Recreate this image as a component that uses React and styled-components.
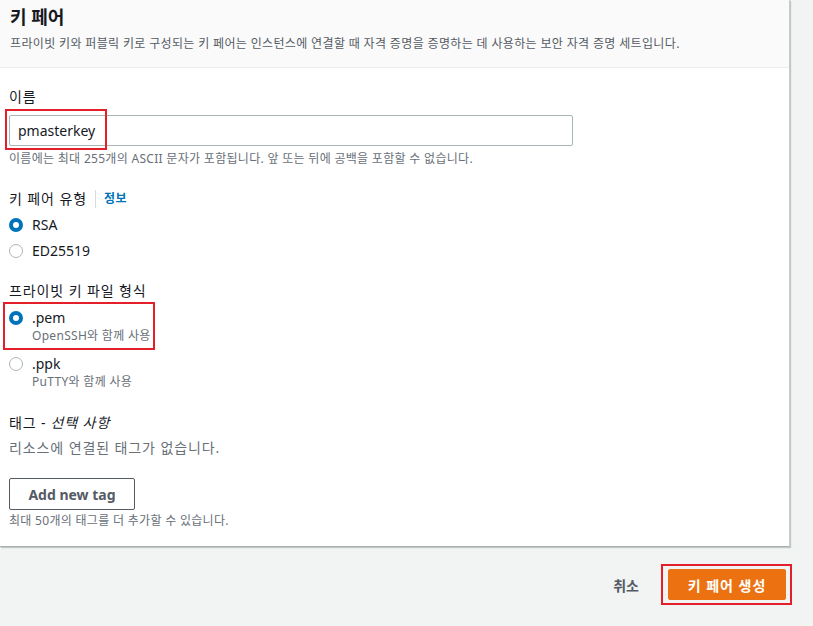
import React from 'react';
import styled, { createGlobalStyle } from 'styled-components';

const GlobalStyle = createGlobalStyle`
  html, body {
    margin: 0;
    padding: 0;
    background: #f2f3f3;
    font-family: "Noto Sans", "Noto Sans CJK KR", sans-serif;
    color: #16191f;
  }
`;

const Page = styled.div`
  width: 813px;
  height: 626px;
  overflow: hidden;
`;

const Card = styled.section`
  width: 789px;
  background: #ffffff;
  border-right: 1px solid #c6cccc;
  border-bottom: 1px solid #a9b0b0;
  box-shadow: 1px 1px 1px rgba(0, 28, 36, 0.2);
`;

const CardHeader = styled.header`
  background: #fafafa;
  border-bottom: 1px solid #eaeded;
  padding: 5px 10px 0;
  height: 62px;
`;

const Title = styled.h2`
  margin: 0;
  font-size: 18px;
  line-height: 24px;
  font-weight: 700;
`;

const Description = styled.p`
  margin: 7px 0 0;
  font-size: 12px;
  line-height: 16px;
  letter-spacing: 0.35px;
  color: #545b64;
`;

const CardBody = styled.div`
  padding: 19px 9px 17px;
  display: flex;
  flex-direction: column;
`;

const Field = styled.div`
  display: flex;
  flex-direction: column;
  margin-bottom: ${p => p.$gap || 20}px;
`;

const Label = styled.div`
  font-size: 14px;
  line-height: 20px;
  letter-spacing: 0.9px;
  margin-bottom: ${p => p.$gap || 8}px;
  display: flex;
  align-items: center;
`;

const Italic = styled.i`
  margin-left: 4px;
`;

const InfoLink = styled.span`
  color: #0073bb;
  font-size: 12px;
  font-weight: 700;
  letter-spacing: 0.5px;
  border-left: 1px solid #d5dbdb;
  margin-left: 8px;
  padding-left: 8px;
  line-height: 18px;
`;

const InputWrap = styled.div`
  position: relative;
  width: 564px;
`;

const TextInput = styled.div`
  box-sizing: border-box;
  height: 31px;
  border: 1px solid #aab7b8;
  border-radius: 2px;
  padding: 0 8px;
  display: flex;
  align-items: center;
  font-size: 14px;
`;

const Highlight = styled.div`
  position: absolute;
  border: 2px solid #e3202a;
  pointer-events: none;
  left: ${p => p.$left}px;
  top: ${p => p.$top}px;
  width: ${p => p.$width}px;
  height: ${p => p.$height}px;
  box-sizing: border-box;
`;

const Hint = styled.div`
  font-size: 12px;
  line-height: 16px;
  letter-spacing: 0.3px;
  color: #687078;
  margin-top: ${p => p.$top || 4}px;
`;

const Option = styled.div`
  position: relative;
  display: flex;
  align-items: flex-start;
  gap: 9px;
  margin-bottom: ${p => p.$gap || 6}px;
`;

const Radio = styled.span`
  box-sizing: border-box;
  width: 14px;
  height: 14px;
  border-radius: 50%;
  margin-top: 3px;
  flex-shrink: 0;
  border: ${p => (p.$checked ? '4px solid #0073bb' : '1px solid #aab7b8')};
  background: #ffffff;
`;

const OptionText = styled.div`
  display: flex;
  flex-direction: column;
`;

const OptionLabel = styled.span`
  font-size: 14px;
  line-height: 20px;
`;

const OptionHint = styled.span`
  font-size: 12px;
  line-height: 16px;
  letter-spacing: 0.3px;
  color: #687078;
`;

const Empty = styled.div`
  font-size: 14px;
  line-height: 20px;
  letter-spacing: 0.9px;
  color: #687078;
  margin-bottom: 20px;
`;

const SecondaryButton = styled.button`
  align-self: flex-start;
  box-sizing: border-box;
  width: 126px;
  height: 32px;
  background: #ffffff;
  border: 1px solid #545b64;
  border-radius: 2px;
  font-family: inherit;
  font-size: 14px;
  font-weight: 700;
  color: #545b64;
`;

const Footer = styled.div`
  display: flex;
  justify-content: flex-end;
  align-items: center;
  padding: 17px 21px 0 0;
  gap: 22px;
`;

const LinkButton = styled.button`
  background: none;
  border: none;
  font-family: inherit;
  font-size: 14px;
  font-weight: 700;
  color: #545b64;
  padding: 0;
`;

const PrimaryFrame = styled.div`
  border: 2px solid #e3202a;
  padding: 3px 4px 3px 5px;
`;

const PrimaryButton = styled.button`
  width: 118px;
  height: 31px;
  background: #ec7211;
  border: 1px solid #ec7211;
  border-radius: 2px;
  color: #ffffff;
  font-family: inherit;
  font-size: 14px;
  font-weight: 700;
  letter-spacing: 1px;
`;

export default function App() {
  return (
    <Page>
      <GlobalStyle />
      <Card>
        <CardHeader>
          <Title>키 페어</Title>
          <Description>
            프라이빗 키와 퍼블릭 키로 구성되는 키 페어는 인스턴스에 연결할 때 자격 증명을 증명하는 데 사용하는 보안 자격 증명 세트입니다.
          </Description>
        </CardHeader>
        <CardBody>
          <Field $gap={22}>
            <Label $gap={8}>이름</Label>
            <InputWrap>
              <TextInput>pmasterkey</TextInput>
              <Highlight $left={-4} $top={-6} $width={102} $height={41} />
            </InputWrap>
            <Hint $top={5}>이름에는 최대 255개의 ASCII 문자가 포함됩니다. 앞 또는 뒤에 공백을 포함할 수 없습니다.</Hint>
          </Field>

          <Field $gap={14}>
            <Label $gap={6}>
              키 페어 유형<InfoLink>정보</InfoLink>
            </Label>
            <Option>
              <Radio $checked />
              <OptionText>
                <OptionLabel>RSA</OptionLabel>
              </OptionText>
            </Option>
            <Option $gap={0}>
              <Radio />
              <OptionText>
                <OptionLabel>ED25519</OptionLabel>
              </OptionText>
            </Option>
          </Field>

          <Field $gap={17}>
            <Label $gap={7}>프라이빗 키 파일 형식</Label>
            <Option $gap={10}>
              <Radio $checked />
              <OptionText>
                <OptionLabel>.pem</OptionLabel>
                <OptionHint>OpenSSH와 함께 사용</OptionHint>
              </OptionText>
              <Highlight $left={-6} $top={-6} $width={152} $height={48} />
            </Option>
            <Option $gap={0}>
              <Radio />
              <OptionText>
                <OptionLabel>.ppk</OptionLabel>
                <OptionHint>PuTTY와 함께 사용</OptionHint>
              </OptionText>
            </Option>
          </Field>

          <Label $gap={5}>
            태그 -<Italic>선택 사항</Italic>
          </Label>
          <Empty>리소스에 연결된 태그가 없습니다.</Empty>
          <SecondaryButton>Add new tag</SecondaryButton>
          <Hint $top={3}>최대 50개의 태그를 더 추가할 수 있습니다.</Hint>
        </CardBody>
      </Card>
      <Footer>
        <LinkButton>취소</LinkButton>
        <PrimaryFrame>
          <PrimaryButton>키 페어 생성</PrimaryButton>
        </PrimaryFrame>
      </Footer>
    </Page>
  );
}
